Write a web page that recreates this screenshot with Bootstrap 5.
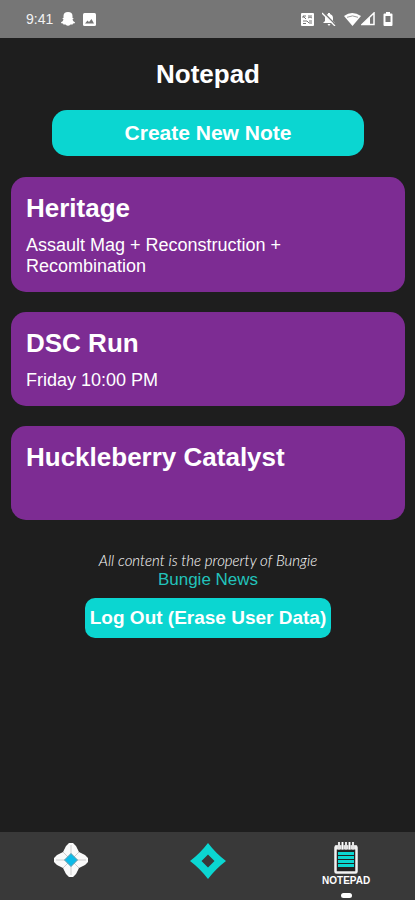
<!DOCTYPE html>
<html lang="en">
<head>
<meta charset="utf-8">
<meta name="viewport" content="width=device-width, initial-scale=1">
<title>Notepad</title>
<link href="https://cdn.jsdelivr.net/npm/bootstrap@5.3.0/dist/css/bootstrap.min.css" rel="stylesheet">
<style>
  body { background: #1e1e1e; color: #fff; font-family: "Liberation Sans", Arial, sans-serif; }
  .status-bar { background: #767676; height: 38px; padding: 0 22px 0 26px; font-size: 14px; line-height: 20px; color: #f2f2f2; }
  .page-main { padding: 20px 10px 20px 11px; }
  .page-title, .note-title { font-size: 26px; line-height: 32px; font-weight: 700; }
  .page-title { margin-bottom: 20px; }
  .btn-aqua { --bs-btn-bg: #0bd6d1; --bs-btn-color: #fff; --bs-btn-hover-bg: #09bdb9; --bs-btn-hover-color: #fff; --bs-btn-active-bg: #09aaa6; --bs-btn-active-color: #fff; font-weight: 700; border: 0; }
  .create-btn { width: 79%; font-size: 21px; line-height: 26px; padding: 10px; border-radius: 15px; }
  .logout-btn { font-size: 19px; line-height: 24px; padding: 8px 5px; border-radius: 10px; margin-top: 8px; }
  .note-list { gap: 20px; margin-top: 21px; }
  .note { --bs-card-bg: #7d2c93; --bs-card-color: #fff; border: 0; border-radius: 15px; padding: 15px; }
  .note-title { margin-bottom: 11px; }
  .note-text { font-size: 18px; line-height: 21px; min-height: 21px; }
  .page-foot { margin-top: 30px; line-height: 20px; }
  .legal { font-family: Lato, "Liberation Sans", sans-serif; font-weight: 300; font-style: italic; font-size: 15px; }
  .news-link { color: #22c3bb; font-size: 17px; }
  .tab-bar { background: #393939; height: 68px; padding-left: 2px; }
  .tab-bar a { color: #fff; font-size: 10px; font-weight: 700; line-height: 12px; padding-top: 10px; }
  .pill { width: 11px; height: 5px; margin-top: 6px; background: #fff; }
</style>
<script src="https://cdn.jsdelivr.net/npm/bootstrap@5.3.0/dist/js/bootstrap.bundle.min.js" defer></script>
</head>
<body class="d-flex flex-column min-vh-100">
<header class="status-bar d-flex align-items-center justify-content-between">
  <div class="d-flex align-items-center gap-2">
    <span>9:41</span>
    <svg width="14" height="14" viewBox="0 0 14 14" fill="#fff" aria-hidden="true"><path d="M7 0C4 0 2.500 1.500 2.500 4v2L1.200 6 2.500 7.500Q2 9.500 0 10.200L.3 11.200 2 11.500 2.400 12.400 4.500 12.500Q7 15 9.500 12.500L11.600 12.400 12 11.500 13.700 11.200 14 10.200Q12 9.500 11.500 7.500L12.800 6 11.500 6V4C11.500 1.500 10 0 7 0Z"/></svg>
    <svg width="13" height="13" viewBox="0 0 13 13" aria-hidden="true"><rect width="13" height="13" rx="1.500" fill="#fff"/><path d="M2 10.500 4.500 7.500 6 9 8.500 6 11 10.500Z" fill="#767676"/></svg>
  </div>
  <div class="d-flex align-items-center gap-2">
    <svg width="13" height="13" viewBox="0 0 13 13" aria-hidden="true"><rect width="13" height="13" rx="1" fill="#fff"/><path d="M2 5V3h3M2 3l3 3M7 3h4M7 5q2-2 4 0M2 8h4l2 2h3M2 10.500h3M8 8h3" stroke="#767676" fill="none"/></svg>
    <svg width="14" height="14" viewBox="0 0 14 14" aria-hidden="true"><path d="M6 2V1h2v1Q11 3 11 6v3l2 2H1L3 9V6Q3 3 6 2M5.500 12h3L7 14Z" fill="#fff"/><path d="M1 0 14 13" stroke="#767676" stroke-width="1.500"/><path d="M0 1 13 14" stroke="#fff" stroke-width="1.300"/></svg>
    <div class="d-flex align-items-center">
      <svg width="17" height="14" viewBox="0 0 17 14" aria-hidden="true"><path d="M0 4Q8 -2 17 4L8.500 14Z" fill="#fff"/><path d="M3 5.300Q8.500 2.500 14 5.300" fill="none" stroke="#999"/></svg>
      <svg width="14" height="14" viewBox="0 0 14 14" aria-hidden="true"><path d="M1 12.500 13 1V12.500Z" fill="none" stroke="#fff" stroke-width="1.500"/><path d="M1 13 9 5V13Z" fill="#fff"/></svg>
    </div>
    <svg width="10" height="14" viewBox="0 0 10 14" aria-hidden="true"><path d="M3 0h4v1.500h1.500q1 0 1 1V13q0 1-1 1h-7q-1 0-1-1V2.500q0-1 1-1H3Z" fill="#fff"/><rect x="2.500" y="4" width="5" height="6" fill="#767676"/></svg>
  </div>
</header>

<main class="page-main flex-grow-1 text-center">
  <h1 class="page-title">Notepad</h1>
  <button type="button" class="btn btn-aqua create-btn">Create New Note</button>
  <section class="note-list d-flex flex-column text-start" aria-label="Notes">
    <article class="card note">
      <h2 class="note-title">Heritage</h2>
      <p class="note-text mb-0">Assault Mag + Reconstruction + Recombination</p>
    </article>
    <article class="card note">
      <h2 class="note-title">DSC Run</h2>
      <p class="note-text mb-0">Friday 10:00 PM</p>
    </article>
    <article class="card note">
      <h2 class="note-title">Huckleberry Catalyst</h2>
      <p class="note-text mb-0"></p>
    </article>
  </section>
  <footer class="page-foot d-flex flex-column align-items-center">
    <p class="legal mb-0">All content is the property of Bungie</p>
    <a href="#news" class="news-link text-decoration-none">Bungie News</a>
    <button type="button" class="btn btn-aqua logout-btn">Log Out (Erase User Data)</button>
  </footer>
</main>

<nav class="tab-bar d-flex" aria-label="Main">
  <a href="#ghost" class="col-4 d-flex flex-column align-items-center text-decoration-none" aria-label="Ghost">
    <svg width="36" height="36" viewBox="0 0 36 36" aria-hidden="true"><path d="M16 1h4l3 3 3 6 6 3 3 3v4l-3 3-6 3-3 6-3 3h-4l-3-3-3-6-6-3-3-3v-4l3-3 6-3 3-6Z" fill="#fafafa"/><path d="M18 3v9M18 24v9M3 18h9M24 18h9M10 10l5 5M26 10l-5 5M10 26l5-5M26 26l-5-5" stroke="#ccc"/><path d="M18 11.500 24.500 18 18 24.500 11.500 18Z" fill="#0ebbe8" stroke="#5d9aad"/></svg>
  </a>
  <a href="#diamond" class="col-4 d-flex flex-column align-items-center text-decoration-none" aria-label="Home">
    <svg width="38" height="38" viewBox="0 0 38 38" aria-hidden="true"><path fill-rule="evenodd" d="M19 1Q27 11.500 37 19 27 26.500 19 37 11 26.500 1 19 11 11.500 19 1ZM19 12.500 12.500 19 19 25.500 25.500 19Z" fill="#0bd6d1"/></svg>
  </a>
  <a href="#notepad" class="col-4 d-flex flex-column align-items-center text-decoration-none" aria-current="page">
    <svg width="24" height="33" viewBox="0 0 24 33" aria-hidden="true"><rect x="1.500" y="4.500" width="21" height="26" rx="1" fill="#222" stroke="#f2f2f2" stroke-width="2.500"/><path d="M1 5.500h22" stroke="#f2f2f2" stroke-width="4"/><path d="M5 0v8M8.500 0v8M12 0v8M15.500 0v8M19 0v8" stroke="#777" stroke-width="2.200"/><path d="M5 0v7.500M8.500 0v7.500M12 0v7.500M15.500 0v7.500M19 0v7.500" stroke="#fff" stroke-width="1.600"/><path d="M4 11.500h16M4 15.500h16M4 19.500h16M4 23.500h16" stroke="#0bd6d1" stroke-width="2.800"/></svg>
    <span>NOTEPAD</span>
    <span class="pill rounded-pill"></span>
  </a>
</nav>
</body>
</html>
